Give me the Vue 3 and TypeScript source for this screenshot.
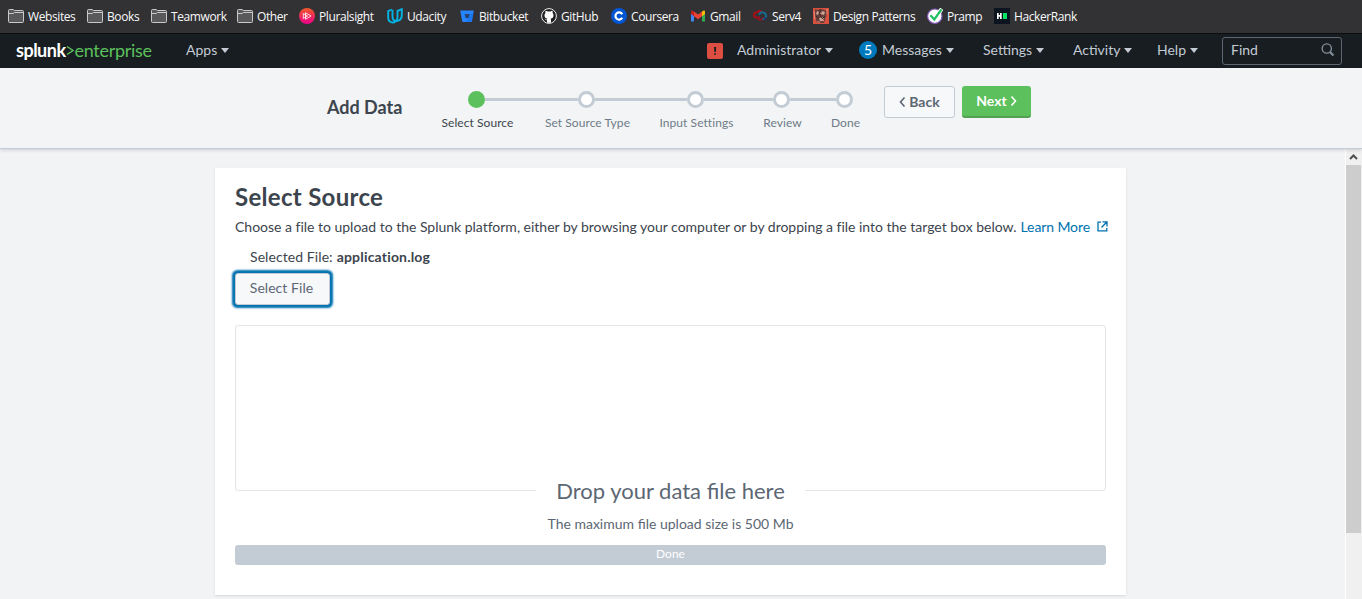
<script setup lang="ts">
interface Bookmark { label: string; icon: string; width: number }
interface Step { label: string; width: number; active?: boolean }
interface MenuItem { label: string; width: number; badge?: string }

const bookmarks: Bookmark[] = [
  { label: 'Websites', icon: 'folder', width: 79 },
  { label: 'Books', icon: 'folder', width: 64 },
  { label: 'Teamwork', icon: 'folder', width: 86 },
  { label: 'Other', icon: 'folder', width: 62 },
  { label: 'Pluralsight', icon: 'pluralsight', width: 88 },
  { label: 'Udacity', icon: 'udacity', width: 72 },
  { label: 'Bitbucket', icon: 'bitbucket', width: 82 },
  { label: 'GitHub', icon: 'github', width: 70 },
  { label: 'Coursera', icon: 'coursera', width: 79 },
  { label: 'Gmail', icon: 'gmail', width: 62 },
  { label: 'Serv4', icon: 'serv4', width: 61 },
  { label: 'Design Patterns', icon: 'patterns', width: 114 },
  { label: 'Pramp', icon: 'pramp', width: 67 },
  { label: 'HackerRank', icon: 'hackerrank', width: 90 },
]

const menus: MenuItem[] = [
  { label: 'Administrator', width: 122 },
  { label: 'Messages', width: 124, badge: '5' },
  { label: 'Settings', width: 90 },
  { label: 'Activity', width: 84 },
  { label: 'Help', width: 65 },
]

const steps: Step[] = [
  { label: 'Select Source', width: 103, active: true },
  { label: 'Set Source Type', width: 117 },
  { label: 'Input Settings', width: 101 },
  { label: 'Review', width: 71 },
  { label: 'Done', width: 55 },
]
</script>

<template>
  <div class="page">
    <nav class="bookmarks">
      <a v-for="b in bookmarks" :key="b.label" class="bookmark" :style="{ width: b.width + 'px' }">
        <svg class="fav" viewBox="0 0 16 16" width="16" height="16">
          <g v-if="b.icon === 'folder'" fill="#59595b" stroke="#c9c9ca">
            <path d="M.5 13V2.500q0-1 1-1H5L6.500 2.500h8q1 0 1 1V13.500q0 1-1 1h-13q-1 0-1-1z" />
            <path d="M.5 5.500h4.500l1.500-1h9" fill="none" />
          </g>
          <g v-else-if="b.icon === 'pluralsight'">
            <defs>
              <linearGradient id="psg" x1="0" y1="0" x2="0" y2="1">
                <stop offset="0" stop-color="#f05a28" /><stop offset="1" stop-color="#ec008c" />
              </linearGradient>
            </defs>
            <circle cx="8" cy="8" r="8" fill="url(#psg)" />
            <path d="M6.500 4.800v6.400L12 8zM4.300 5.500v5L8.500 8z" fill="none" stroke="#fff" stroke-width=".8" />
          </g>
          <g v-else-if="b.icon === 'udacity'" fill="none" stroke="#02b3e4" stroke-width="1.900">
            <path d="M4.800 1.500L1.200 3.200v6.300q0 4.500 4.300 5 2 0 3-1" />
            <path d="M5.500 1.800v6.700q0 4.500 3.700 4.500 5.600 0 5.600-6V1.200L10.500 3v6.500q0 2-1.500 3.500" />
          </g>
          <g v-else-if="b.icon === 'bitbucket'">
            <path d="M1.800 2.500h12.400q.7 0 .5.800l-1.700 10q-.2.700-.8.700H4q-.7 0-.8-.7l-1.900-10q-.1-.8.500-.8z" fill="#2684ff" />
            <path d="M5.700 6h4.800l-.8 4H6.500z" fill="#29436d" />
            <path d="M10.500 6h3.700l-1.300 7.500-.7.500H7z" fill="#0c5bd5" opacity=".35" />
          </g>
          <g v-else-if="b.icon === 'github'">
            <circle cx="8" cy="8" r="7.400" fill="#1d1e20" stroke="#eee" stroke-width="1" />
            <path d="M6 14.800v-2.500c-1.600.1-2-1-2.500-1.500 1 0 1.300 1 2.500.7l.4-.8C4.500 10.400 3.500 9.300 3.500 7.200c0-.9.300-1.700.9-2.300-.2-.8-.1-1.500.1-2.200.8 0 1.600.4 2.200.9.900-.2 1.700-.2 2.600 0 .7-.5 1.400-.8 2.200-.9.200.7.300 1.400.1 2.200.6.600.9 1.400.9 2.300 0 2.100-1 3.200-2.900 3.500.3.400.4.900.4 1.500v2.600z" fill="#fff" />
          </g>
          <g v-else-if="b.icon === 'coursera'">
            <circle cx="8" cy="8" r="8" fill="#0056d2" />
            <path d="M11.200 6.200A3.600 3.600 0 1 0 11.200 9.800" fill="none" stroke="#fff" stroke-width="2.200" />
          </g>
          <g v-else-if="b.icon === 'gmail'">
            <path d="M1 4v9.500h3V6z" fill="#4285f4" />
            <path d="M15 4v9.500h-3V6z" fill="#34a853" />
            <path d="M12 3.500q3-2.200 3 .5v2l-3 2.200z" fill="#fbbc04" />
            <path d="M4 3.500l4 3 4-3v4.700L8 11.200 4 8.200z" fill="#ea4335" />
            <path d="M1 4v2l3 2.200V3.500Q1 1.300 1 4z" fill="#c5221f" />
          </g>
          <g v-else-if="b.icon === 'serv4'" fill="none" stroke-width="2">
            <path d="M8 9.500H4Q1.500 9 2 6.500 2.500 4 5.500 4.200 7 2 9.500 3.500" stroke="#a90f18" />
            <path d="M5.500 9.500q2.500 5 6-.2" stroke="#8c1520" />
            <path d="M7.300 7Q8 3.600 11 4.500 14 5 14 8q0 3.500-3.500 3" stroke="#176b91" />
            <path d="M12.500 11.500l2-1.500" stroke="#252a61" />
          </g>
          <g v-else-if="b.icon === 'patterns'">
            <path d="M0 0h16v16H0z" fill="#d9503f" />
            <path d="M2 1l3 1 4-1 5 2-1 6-2 6H4L2 9z" fill="#6b403a" />
            <path d="M4 3l2 1-1 3-2-1zM9 3l3 1-1 3-3-1zM6 10l5-1-1 4H7z" fill="#c7a599" />
            <path d="M7 1v7l2 2M3 8l3 3M12 8l-3 3" stroke="#38282b" fill="none" />
            <path d="M1 3l1 8M14 1v5M4 14h3M9 12l2 1M7 5l2 1" stroke="#ef8a74" />
          </g>
          <g v-else-if="b.icon === 'pramp'">
            <circle cx="7.800" cy="8.200" r="7.200" fill="#fff" stroke="#8058b5" stroke-width="1.200" />
            <path d="M3.500 7.200l3.800 4.300L14.800.8" fill="none" stroke="#fff" stroke-width="4" />
            <path d="M3.500 7.200l3.800 4.300L14.500 1.300" fill="none" stroke="#20bf63" stroke-width="2.300" />
          </g>
          <g v-else>
            <path d="M0 0h16v16H0z" fill="#0b141f" />
            <path d="M3 5h1.700v2H6V5h1.700v6H6V8.700H4.700V11H3z" fill="#fff" />
            <path d="M9 5h4v6H9z" fill="#05e565" />
          </g>
        </svg>
        <span>{{ b.label }}</span>
      </a>
    </nav>

    <header class="topbar">
      <div class="logo"><b>splunk</b><svg width="8" height="12" viewBox="0 0 8 12"><path d="M1 1.500L7 5.500 1 9.500" fill="none" stroke="#5cc05c" stroke-width="1.500" /></svg><span>enterprise</span></div>
      <a class="menu apps">Apps<i class="caret" /></a>
      <div class="alert"><svg width="16" height="16" viewBox="0 0 16 16"><path d="M7 4h2.200l-.4 5H7.400zM7.200 10.200h1.700v1.600H7.200z" fill="#171d21" /></svg></div>
      <a v-for="m in menus" :key="m.label" class="menu" :style="{ width: m.width + 'px' }">
        <span v-if="m.badge" class="badge">{{ m.badge }}</span>{{ m.label }}<i class="caret" />
      </a>
      <div class="find">
        <span>Find</span>
        <svg width="14" height="14" viewBox="0 0 14 14" fill="none" stroke="#818d99"><circle cx="5.800" cy="5.500" r="4.600" stroke-width="1.400" /><path d="M9 9l3.500 3.500" stroke-width="2.200" /></svg>
      </div>
    </header>

    <section class="wizard">
      <h1>Add Data</h1>
      <ol class="steps">
        <li v-for="s in steps" :key="s.label" :class="['step', { active: s.active }]" :style="{ width: s.width + 'px' }">
          <div class="track"><i class="line" /><i class="dot" /><i class="line" /></div>
          <span class="label">{{ s.label }}</span>
        </li>
      </ol>
      <button class="btn back"><svg width="7" height="11" viewBox="0 0 7 11"><path d="M5.500 1.500l-4 4.500 4 4.500" /></svg><span>Back</span></button>
      <button class="btn next"><span>Next</span><svg width="7" height="11" viewBox="0 0 7 11"><path d="M1.500 1.500l4 4.500-4 4.500" /></svg></button>
    </section>

    <div class="body">
      <main class="card">
        <h2>Select Source</h2>
        <p class="intro"><span>Choose a file to upload to the Splunk platform, either by browsing your computer or by dropping a file into the target box below.</span><a>Learn More</a><svg width="11" height="11" viewBox="0 0 11 11" fill="none" stroke="#0072b0" stroke-width="1.300"><path d="M4 1.200H1v8.600h8.800V7M5.500.8H10v4.700M9.800 1L4.500 6.500" /></svg></p>
        <p class="selected"><span>Selected File:</span><b>application.log</b></p>
        <button class="select"><span>Select File</span></button>
        <div class="drop"><span class="caption">Drop your data file here</span></div>
        <p class="limit"><span>The maximum file upload size is 500 Mb</span></p>
        <div class="progress"><span>Done</span></div>
      </main>
      <aside class="scroll">
        <div class="arrow"><svg width="9" height="6" viewBox="0 0 9 6"><path d="M1 5l3.500-3.500L8 5" fill="none" stroke="#505050" stroke-width="2" /></svg></div>
        <div class="thumb" />
      </aside>
    </div>
  </div>
</template>

<style>
body { margin: 0; overflow: hidden; }
</style>

<style scoped>
* { box-sizing: border-box; }
.page { width: 1362px; height: 599px; overflow: hidden; display: flex; flex-direction: column; background: #f2f3f5; font-family: Lato, "Liberation Sans", sans-serif; font-size: 14px; color: #3c444d; white-space: nowrap; }
h1, h2, p, ol { margin: 0; padding: 0; }
svg { display: block; flex: none; }
.bookmarks { flex: none; height: 34px; display: flex; align-items: center; padding: 0 0 1px 8px; background: #323234; border-bottom: 1px solid #0c0d0e; font: 12px "Open Sans", "Noto Sans", sans-serif; color: #f9f9fa; letter-spacing: -.4px; }
.bookmark { flex: none; display: flex; align-items: center; gap: 4px; }
.topbar { flex: none; height: 34px; display: flex; align-items: center; background: #171d21; color: #c3cbd4; }
.logo { flex: none; width: 170px; padding: 0 0 2px 16px; display: flex; align-items: center; font-size: 18px; letter-spacing: -.3px; color: #5cc05c; }
.logo b { color: #fff; letter-spacing: -.5px; }
.logo svg { margin: 2px 1px 0 0; }
.menu { flex: none; display: flex; align-items: center; padding-bottom: 3px; }
.apps { width: 537px; padding-left: 16px; }
.caret { margin: 1px 0 0 4px; border: 4.500px solid transparent; border-top: 5px solid #c3cbd4; border-bottom: 0; }
.alert { flex: none; width: 16px; height: 16px; margin-right: 14px; border-radius: 2px; background: #dc4e41; }
.badge { width: 18px; height: 18px; margin: 1px 5px 0 0; border-radius: 9px; background: #007abd; color: #fff; text-align: center; line-height: 17px; }
.find { flex: none; width: 120px; height: 28px; display: flex; align-items: center; justify-content: space-between; padding: 0 6px 3px 8px; border: 1px solid #5c6773; border-radius: 3px; }
.wizard { flex: none; height: 81px; display: flex; align-items: flex-start; background: #f2f4f5; border-bottom: 1px solid #c3cbd4; box-shadow: 0 1px 4px rgba(0, 0, 60, .16); z-index: 1; }
.wizard h1 { width: 425px; padding: 28px 0 0 327px; font-size: 18px; line-height: 22px; font-weight: 700; }
.steps { width: 459px; margin-top: 23px; padding: 0; display: flex; list-style: none; }
.step { flex: none; text-align: center; color: #6f7b88; font-size: 12px; line-height: 14px; }
.step.active { color: #3c444d; }
.label { padding-left: 2px; letter-spacing: .06px; }
.track { display: flex; align-items: center; height: 17px; margin-bottom: 8px; }
.line { flex: 1; height: 3px; background: #c3cbd4; }
.dot { width: 17px; height: 17px; border: 3px solid #c3cbd4; border-radius: 50%; background: #fff; }
.active .dot { background: #5cc05c; border-color: #5cc05c; }
.step:first-child .line:first-child, .step:last-child .line:last-child { background: transparent; }
.btn { flex: none; height: 32px; margin-top: 18px; padding: 0 0 2px; display: flex; align-items: center; justify-content: center; gap: 3px; border-radius: 3px; font: 700 14px Lato, sans-serif; }
.btn svg { fill: none; stroke: currentColor; stroke-width: 1.600; }
.back { width: 71px; border: 1px solid #c3cbd4; background: #f7f8fa; color: #5c6773; }
.next { width: 69px; margin-left: 7px; border: 0; border-bottom: 2px solid #53a051; padding-bottom: 1px; background: #5cc05c; color: #fff; }
.body { flex: 1; display: flex; justify-content: space-between; }
.card { width: 911px; height: 427px; margin: 19px 0 0 215px; padding: 0 20px; background: #fff; box-shadow: 0 1px 2px rgba(40, 50, 70, .14); }
.card h2 { padding-top: 14px; font-size: 24px; line-height: 30px; font-weight: 700; letter-spacing: .3px; }
.intro { height: 20px; margin-top: 4px; display: flex; align-items: center; font-size: 14px; }
.intro > span { letter-spacing: -.012px; }
.intro a { margin: 0 7px 0 4px; letter-spacing: -.1px; color: #0072b0; }
.selected { height: 20px; margin: 10px 0 7px; padding-left: 15px; display: flex; align-items: center; gap: 4px; }
.selected span { letter-spacing: .08px; }
.selected b { letter-spacing: .18px; }
.select { display: block; width: 95px; height: 32px; padding: 0 2px 3px 0; border: 1px solid #c3cbd4; border-radius: 3px; background: #f7f8fa; color: #5c6773; font: 14px Lato, sans-serif; letter-spacing: .05px; box-shadow: 0 0 2px 2.500px #0072b0; }
.drop { height: 166px; margin-top: 20px; border: 1px solid #e1e6eb; border-radius: 3px; display: flex; justify-content: center; align-items: flex-end; }
.caption { margin-bottom: -16px; padding: 0 20px; background: #fff; font-size: 22px; line-height: 30px; color: #5c6773; }
.limit { height: 20px; margin: 23px 0 11px; text-align: center; line-height: 20px; color: #5c6773; }
.progress { height: 20px; border-radius: 3px; background: #c3cbd4; color: #fff; text-align: center; font-size: 12px; line-height: 18px; }
.scroll { width: 17px; padding-right: 1px; border-left: 1px solid #fff; background: #f0f0f0; }
.arrow { height: 16px; display: flex; align-items: center; justify-content: center; }
.thumb { width: 15px; height: 368px; background: #cdcdcd; }
</style>
